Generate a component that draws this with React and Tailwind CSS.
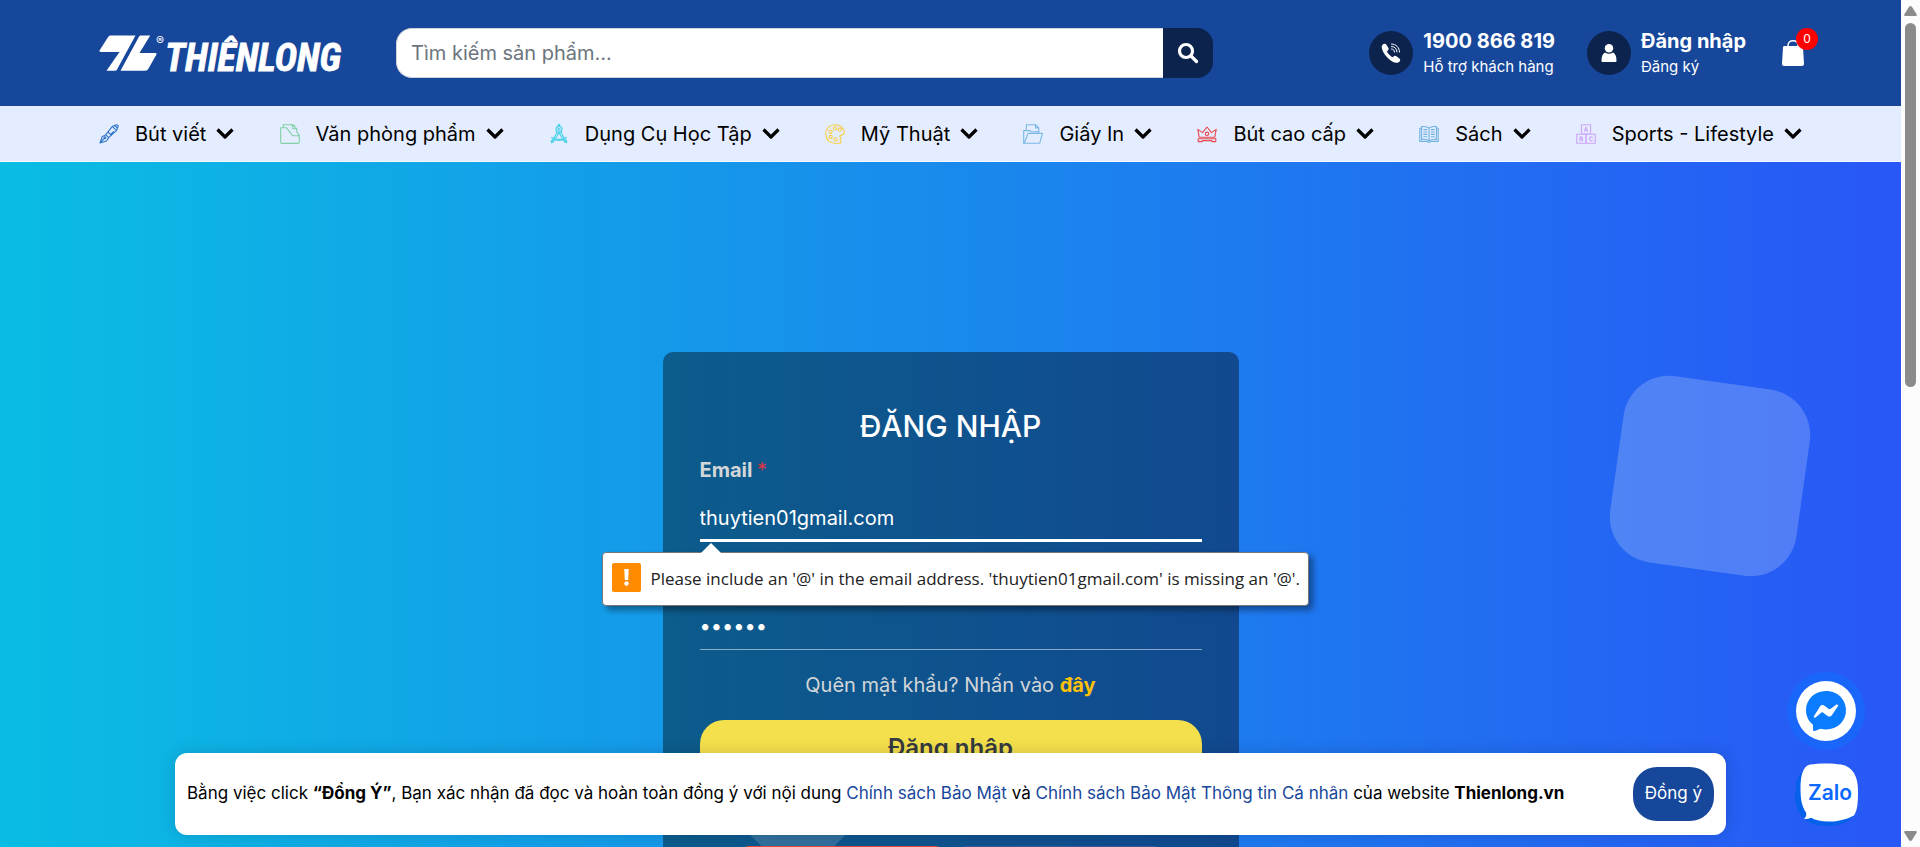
import React from "react";

const line = {
  width: 20,
  height: 20,
  viewBox: "0 0 20 20",
  fill: "none",
  strokeWidth: 1.1,
  strokeLinejoin: "round",
  strokeLinecap: "round",
  "aria-hidden": true,
};

const PenIcon = () => (
  <svg {...line} stroke="#2f74c8">
    <path d="M1 19l2.2-6.2 3.6-2.2 3 3-2.4 3.4L1 19zM1 19l4.6-4.8M6.8 10.6l6.6-8.2 4-1.6c1.4 0 2 .8 1.6 2.2l-1.6 3.6-7.8 7M13.4 2.4l3.8 4M9 8l3.4 3.4M14.6 7.6l-3 2.8M18.6 4l-3-2.6" />
    <circle cx="6" cy="13.8" r="0.9" />
  </svg>
);
const FolderIcon = () => (
  <svg {...line} stroke="#7fd0a6">
    <path d="M.7 3.8h2.6V.7h9.4l4 4v3l2.600 3.600v6.600c0 1-.5 1.500-1.400 1.500H2.100c-.9 0-1.400-.5-1.400-1.500V3.800zM12.700.7v4h4M3.300 3.800h3.200l4.300 5.600c.9 1.600 1.600 2.300 3 2.300h5.400M14.400 2.400V1.200h-3" />
  </svg>
);
const CompassIcon = () => (
  <svg {...line} stroke="#49d0ea">
    <circle cx="10" cy="5.4" r="3" />
    <circle cx="10" cy="5.4" r="1.1" />
    <path d="M9.2 2.4V.6h1.6v1.8M8.2 7.9L2.4 18.8l2.2-1L10 8.6l5.4 9.2 2.2 1L11.8 7.9M2.4 13.6c5 2.2 10.2 2.2 15.2 0M3.4 15.3c4.4 1.5 8.8 1.5 13.2 0M2.4 18.8v-2.4M17.6 18.8v-2.4" />
  </svg>
);
const PaletteIcon = () => (
  <svg {...line} stroke="#f8cf44">
    <path d="M9.8.7C4.600.700.7 4.700.7 9.900s4 9.400 9.300 9.400h4.400c1.700 0 1.900-1.400 1.200-2.300-1-1.300-.6-2.500.7-2.700-1.900-.7-1.900-2.900-.2-3.200 2.400-.3 3.200-1.200 3.100-2.800C18.900 3.700 14.900.7 9.800.7z" />
    <circle cx="10" cy="4.300" r="1.600" />
    <circle cx="5.600" cy="7.800" r="1.600" />
    <circle cx="14.800" cy="5.600" r="1.600" />
    <circle cx="5.600" cy="13" r="1.600" />
    <circle cx="10.600" cy="15.400" r="1.600" />
  </svg>
);
const PaperIcon = () => (
  <svg {...line} stroke="#7ab8e6">
    <path d="M3.300 6.600V.700h9.300l3.200 3.200v5.400M12.600.700v3.200h3.200M3.300 6.600H.700v12.700h16L19.400 9.400H5L1.500 18.800M3.300 6.600h4l1.200 1.200h7.300" />
  </svg>
);
const CrownIcon = () => (
  <svg {...line} stroke="#e9484f">
    <path d="M2.200 13.200L.800 5.400l4.700 3.200L10 3l4.500 5.600 4.700-3.200-1.400 7.800zM1.200 17.600v-2.800h17.600v2.800h-4v-1H5.200v1z" />
    <circle cx="10" cy="9.800" r="1.700" />
  </svg>
);
const BookIcon = () => (
  <svg {...line} stroke="#6fb1e0">
    <path d="M10 4.200C8 2.400 5.400 2.200 2.600 2.600v12.800c2.800-.4 5.400-.2 7.400 1.400 2-1.600 4.600-1.800 7.400-1.400V2.600C14.600 2.200 12 2.400 10 4.200zM10 4.200v12.600M2.600 4.200H.800v13.200h7.400c.8 1.200 2.800 1.200 3.600 0h7.400V4.200h-1.800M4.800 5.600h3M4.800 8h3M4.800 10.400h3M4.800 12.800h3M12.200 5.600h3M12.200 8h3M12.200 10.400h3M12.200 12.800h3" />
  </svg>
);
const BlocksIcon = () => (
  <svg {...line} stroke="#cda4fb">
    <path d="M5.400.700h9.200v9.100H5.400zM.700 10.200h9.100v9.100H.700zM10.200 10.200h9.100v9.100h-9.100zM8.500 7.300L10 3.300l1.500 4M9 6.300h2M4 12.800v4h1.600c1.500 0 1.500-2 0-2H4h1.300c1.400 0 1.400-2 0-2zM16.400 13.500c-1.400-1.300-3-.4-3 1.300s1.600 2.600 3 1.300" />
  </svg>
);

const NAV = [
  ["Bút viết", PenIcon],
  ["Văn phòng phẩm", FolderIcon],
  ["Dụng Cụ Học Tập", CompassIcon],
  ["Mỹ Thuật", PaletteIcon],
  ["Giấy In", PaperIcon],
  ["Bút cao cấp", CrownIcon],
  ["Sách", BookIcon],
  ["Sports - Lifestyle", BlocksIcon],
];

function Logo() {
  return (
    <a href="#" aria-label="Thiên Long" className="shrink-0">
      <svg width="244" height="40" viewBox="0 0 244 40" fill="#fff" aria-hidden="true" className="overflow-visible">
        <path d="M12 2.500h24.500L18 36.500c-.4.800-1 1.200-2 1.200H7.500L20.500 19H2c-1.500 0-2-.7-1.200-1.900L9 4.300c.8-1.200 1.500-1.800 3-1.800z" />
        <path d="M42 2.500h9.200L40.500 20h15.800c1.300 0 1.700.7 1 1.800L49.500 35.500c-.8 1.500-1.800 2.200-3.500 2.200H21.500L39.800 4c.5-1 1.100-1.500 2.200-1.500z" />
        <text x="57" y="12" fontSize="12" fontFamily="Inter, sans-serif">®</text>
        <text
          x="66"
          y="38"
          fontSize="38"
          fontWeight="700"
          fontStyle="italic"
          stroke="#fff"
          strokeWidth="0.800"
          fontFamily="'Liberation Sans Narrow', 'Roboto Condensed', 'DejaVu Sans Condensed', sans-serif"
        >
          THIÊNLONG
        </text>
      </svg>
    </a>
  );
}

function Header() {
  return (
    <header className="flex h-[106px] shrink-0 items-center bg-[#17479b] pr-[97px] pl-[99px] text-white">
      <Logo />
      <form className="ml-[53px] flex h-[50px] max-w-[817px] flex-1" onSubmit={(e) => e.preventDefault()}>
        <input
          type="search"
          aria-label="Tìm kiếm sản phẩm"
          placeholder="Tìm kiếm sản phẩm..."
          className="min-w-0 flex-1 rounded-l-2xl border border-r-0 border-[#ced4da] bg-white px-3.5 text-xl text-black outline-none placeholder:text-[#6c757d]"
        />
        <button aria-label="Tìm kiếm" className="flex w-[50px] items-center justify-center rounded-r-2xl bg-[#0c244d]">
          <svg width="22" height="22" viewBox="0 0 22 22" fill="none" stroke="#fff" strokeWidth="3.200" strokeLinecap="round">
            <circle cx="9" cy="9" r="6.500" />
            <path d="M14 14l5.500 5.500" />
          </svg>
        </button>
      </form>
      <div className="ml-auto flex items-center gap-8">
        <div className="flex items-center gap-2.5">
          <span className="flex size-11 items-center justify-center rounded-full bg-[#0c244d]">
            <svg width="20" height="20" viewBox="0 0 20 20" aria-hidden="true">
              <path fill="#fff" d="M1.200 2.200C2.500.500 4.400.300 5.400 1.800l1.900 3c.7 1.200.3 2.100-.8 3-.6.600-.5 1 .1 1.900 1 1.500 2.200 2.800 3.700 3.900.9.700 1.400.7 2 .1 1-1.100 2-1.300 3.200-.4l2.800 2.100c1.400 1.100 1.200 2.700-.7 3.900-2.700 1.600-7.100-.5-11.300-4.900S-.4 4.600 1.200 2.200z" />
              <path fill="none" stroke="#fff" strokeLinecap="round" d="M10.500 1c4.500 0 8 3.500 8 8M10.500 3.500c3.200 0 5.500 2.300 5.500 5.500M10.500 6c1.800 0 3 1.200 3 3" />
            </svg>
          </span>
          <div className="pt-0.5">
            <a href="#" className="block text-xl leading-6 font-bold">1900 866 819</a>
            <span className="block pt-0.5 text-[15px] leading-6">Hỗ trợ khách hàng</span>
          </div>
        </div>
        <div className="flex items-center gap-2.5">
          <span className="flex size-11 items-center justify-center rounded-full bg-[#0c244d]">
            <svg width="16" height="18" viewBox="0 0 16 18" fill="#fff" aria-hidden="true">
              <circle cx="8" cy="4.200" r="4.200" />
              <path d="M4 8.600c2.600 1.600 5.400 1.600 8 0 2.400 1.300 3.500 4.300 3.500 7.900 0 1-.4 1.500-1.500 1.500H2C.900 18 .500 17.500.500 16.500.500 12.900 1.600 9.900 4 8.600z" />
            </svg>
          </span>
          <div className="pt-0.5">
            <a href="#" className="block text-xl leading-6 font-bold">Đăng nhập</a>
            <a href="#" className="block pt-0.5 text-[15px] leading-6">Đăng ký</a>
          </div>
        </div>
        <a href="#" aria-label="Giỏ hàng" className="relative ml-1">
          <svg width="22" height="26" viewBox="0 0 22 26" aria-hidden="true">
            <path fill="#fff" d="M2.500 6h17c1 0 1.400.5 1.500 1.500l1 16c.1 1.500-.7 2.500-2 2.500H2c-1.300 0-2.100-1-2-2.500l1-16C1.100 6.500 1.500 6 2.500 6z" />
            <path fill="none" stroke="#fff" strokeWidth="1.400" d="M6 8V5.500C6 2.500 8 .8 11 .8s5 1.700 5 4.700V8" />
          </svg>
          <span className="absolute -top-3 left-3.5 flex size-[22px] items-center justify-center rounded-full bg-[#f00] text-xs">0</span>
        </a>
      </div>
    </header>
  );
}

function Nav() {
  return (
    <nav className="flex h-14 shrink-0 items-center justify-between border-b border-[#f4f8ff] bg-[#e4edff] px-[99px]">
      {NAV.map(([label, Icon]) => (
        <a key={label} href="#" className="flex items-center text-xl leading-7 whitespace-nowrap text-black">
          <Icon />
          <span className="pr-2.5 pl-4">{label}</span>
          <svg width="18" height="12" viewBox="0 0 18 12" fill="none" stroke="#000" strokeWidth="3.200" strokeLinejoin="round" aria-hidden="true">
            <path d="M1.500 1.500L9 9l7.500-7.500" />
          </svg>
        </a>
      ))}
    </nav>
  );
}

function ValidationBubble() {
  return (
    <div role="alert" className="absolute top-14 -left-[98px] z-10">
      <div className="relative flex h-[54px] items-center rounded-[4px] border border-[#777] bg-white pr-2 pl-[9px] whitespace-nowrap shadow-[4px_4px_6px_rgba(0,0,0,0.4)]">
        <svg className="absolute -top-[10px] left-[97px]" width="22" height="11" viewBox="0 0 22 11" aria-hidden="true">
          <path fill="#fff" d="M0 11L11 0l11 11z" />
        </svg>
        <span className="mb-1 flex size-[29px] items-center justify-center rounded-[2px] bg-[#ff8c00]">
          <svg width="5" height="17" viewBox="0 0 5 17" fill="#fff" aria-hidden="true">
            <path d="M.300 0h4.400l-.5 11H.800z" />
            <circle cx="2.500" cy="14.500" r="2.200" />
          </svg>
        </span>
        <span className="pl-2.5 font-['Open_Sans',sans-serif] text-[17px] leading-6 text-[#222]">
          Please include an '@' in the email address. 'thuytien01gmail.com' is missing an '@'.
        </span>
      </div>
    </div>
  );
}

function LoginCard() {
  return (
    <form
      className="relative mx-auto w-[576px] rounded-[10px] bg-black/40 px-[37px] pt-14 pb-20"
      onSubmit={(e) => e.preventDefault()}
    >
      <h1 className="text-center text-[30px] leading-9 font-medium text-white">ĐĂNG NHẬP</h1>
      <label htmlFor="email" className="mt-2 block text-xl leading-[36px] font-bold text-[#d3d6d8]">
        Email <span className="font-normal text-[#dc3545]">*</span>
      </label>
      <div className="relative mt-2">
        <input
          id="email"
          type="text"
          defaultValue="thuytien01gmail.com"
          className="block h-[46px] w-full border-b-[3px] border-white bg-transparent text-xl text-white outline-none"
        />
        <ValidationBubble />
      </div>
      <input
        id="password"
        type="password"
        aria-label="Mật khẩu"
        defaultValue="123456"
        className="mt-[60px] block h-12 w-full border-b border-white/50 bg-transparent text-xl text-white outline-none"
      />
      <p className="mt-5 text-center text-xl leading-[30px] text-[#d3d6d8]">
        Quên mật khẩu? Nhấn vào <a href="#" className="font-bold text-[#ffc107]">đây</a>
      </p>
      <div className="absolute top-[434px] left-[95px] size-20 rotate-45 bg-white/15" />
      <button className="relative mt-5 block h-14 w-full rounded-3xl bg-[#f4df4d] text-2xl font-semibold text-[#343a40]">
        Đăng nhập
      </button>
      <div className="relative mt-[70px] flex justify-center gap-6">
        <button aria-label="Google" className="h-10 w-[194px] rounded-[3px] bg-[#dd4b39]" />
        <button aria-label="Facebook" className="h-10 w-[194px] rounded-[3px] bg-[#3b5998]" />
      </div>
    </form>
  );
}

function CookieBar() {
  return (
    <div className="absolute inset-x-[175px] bottom-3 z-20 flex h-[82px] items-center justify-between rounded-xl bg-white px-3 shadow-[0_0_16px_rgba(0,0,0,0.15)]">
      <p className="text-[17px] text-black">
        Bằng việc click <b>“Đồng Ý”</b>, Bạn xác nhận đã đọc và hoàn toàn đồng ý với nội dung{" "}
        <a href="#" className="text-[#17479b]">Chính sách Bảo Mật</a> và{" "}
        <a href="#" className="text-[#17479b]">Chính sách Bảo Mật Thông tin Cá nhân</a> của website <b>Thienlong.vn</b>
      </p>
      <button className="h-[54px] shrink-0 rounded-3xl bg-[#17479b] px-3 text-[17px] whitespace-nowrap text-white">Đồng ý</button>
    </div>
  );
}

function ChatButtons() {
  return (
    <div className="absolute right-[35px] bottom-[5px] z-10 flex flex-col items-center gap-[9px]">
      <a href="#" aria-label="Messenger">
        <svg width="80" height="80" viewBox="0 0 80 80" aria-hidden="true">
          <circle cx="40" cy="40" r="39" fill="#1a66fb" />
          <circle cx="40" cy="40" r="30" fill="#fff" />
          <path fill="#0a7cff" d="M40 20c11.500 0 20 8.500 20 19.300S51.500 58.500 40 58.500c-2 0-4-.2-5.800-.8l-4.600 2c-1.500.7-2.600 0-2.600-1.500v-4.400c-4.500-3.500-7-8.700-7-14.500C20 28.500 28.500 20 40 20z" />
          <path fill="#fff" d="M28 45l6-9.500c1-1.500 3-1.900 4.500-.8l4.300 3.300c.5.300 1 .3 1.500 0l6.200-4.400c1-.7 2.300.4 1.600 1.500L46 44c-1 1.600-3 2-4.500.9L37 41.600c-.5-.4-1-.4-1.500 0L29.600 46.400c-1 .7-2.300-.3-1.600-1.400z" />
        </svg>
      </a>
      <a href="#" aria-label="Zalo">
        <svg width="80" height="82" viewBox="0 0 80 82" aria-hidden="true">
          <path fill="#0561ea" d="M10 27C10 12 20 6 40 6c18 0 32 8 32 30S62 66 40 66C20 66 9 54 9 36z" />
          <path fill="#fff" d="M24 4.500C33 3 47 3 55 4.500c12 2 17 12 17 26 0 10 0 19-4 25-6 3-15 6.500-26 6-7-.2-12-1-17-3.800-2 .8-5 1.700-7 1.300 2-2 2.800-4.500 2-6.500C15.500 46 14.500 38 14.500 29c0-13 2-22.500 9.500-24.500z" />
          <text x="44" y="40" textAnchor="middle" fontSize="21" fontWeight="600" fill="#0a68ff" fontFamily="Inter, sans-serif">Zalo</text>
        </svg>
      </a>
    </div>
  );
}

function Scrollbar() {
  return (
    <div className="flex w-[19px] shrink-0 flex-col items-center bg-[#fcfcfc] py-1.5" aria-hidden="true">
      <svg width="13" height="10" viewBox="0 0 13 10" fill="#8b8b8b">
        <path d="M6.500 0c.6 0 1 .3 1.400.8l4.700 7.400c.5.900 0 1.800-1 1.800H1.400c-1 0-1.500-.9-1-1.800L5.100.800C5.500.300 5.900 0 6.500 0z" />
      </svg>
      <div className="mt-[7px] flex w-[11px] flex-1 flex-col">
        <div className="h-[45%] rounded-full bg-[#8b8b8b]" />
      </div>
      <svg width="13" height="10" viewBox="0 0 13 10" fill="#8b8b8b">
        <path d="M6.500 10c-.6 0-1-.3-1.400-.8L.400 1.800C-.100.900.400 0 1.400 0h10.200c1 0 1.500.9 1 1.800L7.900 9.200c-.4.500-.8.800-1.400.8z" />
      </svg>
    </div>
  );
}

export default function App() {
  return (
    <div className="flex h-screen overflow-hidden font-['Inter',sans-serif]">
      <div className="relative flex min-w-0 flex-1 flex-col overflow-hidden">
        <Header />
        <Nav />
        <main className="relative flex-1 bg-linear-[90deg,#0abde3,#2857f6] pt-[190px]">
          <div className="absolute top-[220px] right-[97px] size-[188px] rotate-[8deg] rounded-[46px] bg-white/20" />
          <LoginCard />
        </main>
        <ChatButtons />
        <CookieBar />
      </div>
      <Scrollbar />
    </div>
  );
}
